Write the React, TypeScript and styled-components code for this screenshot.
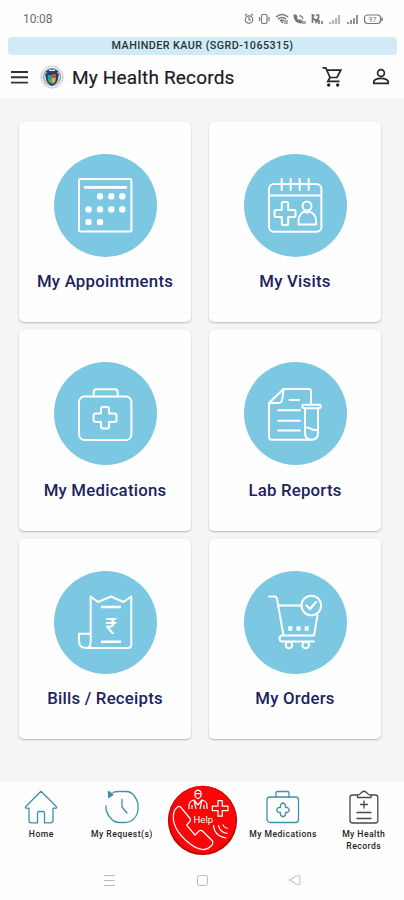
import React from "react";
import styled, { createGlobalStyle } from "styled-components";

const GlobalStyle = createGlobalStyle`
  * { box-sizing: border-box; }
  body { margin: 0; background: #fefefe; font-family: Roboto, "Liberation Sans", sans-serif; }
  svg { display: block; flex: none; }
`;

const Screen = styled.div`
  width: 404px;
  height: 900px;
  display: flex;
  flex-direction: column;
  overflow: hidden;
  background: #fefefe;
`;

const StatusBar = styled.div`
  height: 37px;
  padding: 0 20px 0 23px;
  display: flex;
  align-items: center;
  justify-content: space-between;
  color: #6c6c6c;
`;

const Clock = styled.span`
  font-size: 12px;
  font-weight: 400;
  letter-spacing: -0.1px;
`;

const StatusIcons = styled.div`
  display: flex;
  align-items: center;
`;

const Banner = styled.div`
  height: 18px;
  margin: 0 7px 0 8px;
  border-radius: 4px;
  background: #d1ebf6;
  color: #27343a;
  font-size: 10.8px;
  font-weight: 500;
  line-height: 18px;
  text-align: center;
  letter-spacing: 0.42px;
`;

const AppBar = styled.header`
  height: 43px;
  padding: 0 14px 0 10px;
  display: flex;
  align-items: center;
`;

const Title = styled.h1`
  flex: 1;
  margin: 2px 0 0 8px;
  font-size: 19px;
  font-weight: 400;
  color: #1c1c1c;
  -webkit-text-stroke: 0.2px #1c1c1c;
  letter-spacing: 0.17px;
`;

const HeaderActions = styled.div`
  display: flex;
  gap: 28px;
  margin-top: 1px;
`;

const CartSlot = styled.div`
  margin-right: 2px;
`;

const Logo = styled.svg`
  margin-left: 11px;
`;

const Main = styled.main`
  height: 684px;
  padding: 23.5px 22.5px 0 19px;
  background: #f5f5f5;
`;

const CardGrid = styled.div`
  display: grid;
  grid-template-columns: 172px 172px;
  grid-auto-rows: 200.5px;
  column-gap: 18px;
  row-gap: 8px;
`;

const Card = styled.section`
  padding-top: 32px;
  display: flex;
  flex-direction: column;
  align-items: center;
  background: #fefefe;
  border-radius: 5px;
  box-shadow: 0 1px 2px rgba(0, 0, 0, 0.25);
`;

const IconDisc = styled.div`
  width: 103px;
  height: 103px;
  border-radius: 50%;
  background: #7cc7e2;
  display: flex;
  align-items: center;
  justify-content: center;
  padding-right: 1px;
`;

const CardLabel = styled.div`
  margin-top: 13.5px;
  font-size: 16.8px;
  line-height: 22px;
  font-weight: 500;
  white-space: nowrap;
  color: #201f60;
  letter-spacing: 0.22px;
`;

const TabBar = styled.nav`
  height: 78px;
  padding-left: 1px;
  display: grid;
  grid-template-columns: repeat(5, 1fr);
  background: #fefefe;
`;

const Tab = styled.div`
  padding-top: 8px;
  display: flex;
  flex-direction: column;
  align-items: center;
`;

const HelpTab = styled.div`
  padding-top: 3px;
  display: flex;
  justify-content: center;
`;

const TabLabel = styled.div`
  margin-top: 5px;
  font-size: 8.6px;
  line-height: 11.5px;
  font-weight: 500;
  color: #222;
  text-align: center;
  white-space: pre;
  letter-spacing: 0.45px;
`;

const SystemNav = styled.div`
  height: 40px;
  padding: 0 103px 0 103px;
  display: flex;
  align-items: center;
  justify-content: space-between;
`;

const LineIcon = ({ children }: { children: React.ReactNode }) => (
  <svg width="54" height="54" viewBox="0 0 54 54" overflow="visible" fill="none" stroke="#fff" strokeWidth="2" strokeLinecap="round" strokeLinejoin="round">
    {children}
  </svg>
);

const dotPositions = [
  [22, 18.3], [33.3, 18.3], [44.3, 18.3],
  [10.5, 31.3], [22, 31.3], [33.3, 31.3], [44.3, 31.3],
  [10.5, 44], [22, 44],
];

const AppointmentsIcon = () => (
  <LineIcon>
    <rect x="1" y="1" width="52.4" height="52.4" rx="1.5" />
    <path d="M7 9.4H48" strokeWidth="2.6" />
    {dotPositions.map(([x, y]) => (
      <rect key={`${x}-${y}`} x={x - 3.1} y={y - 3.1} width="6.2" height="6.2" rx="2.2" fill="#fff" stroke="none" />
    ))}
  </LineIcon>
);

const VisitsIcon = () => (
  <LineIcon>
    <rect x="1" y="6" width="52.4" height="47.8" rx="5" />
    <path d="M1 17.5H53M13.7 1V12M22.7 1V12M31.7 1V12M40.7 1V12" />
    <path d="M13.8 25.500q0-1.500 1.500-1.500h3.400q1.500 0 1.500 1.500V32h5.800q1.500 0 1.500 1.500v4q0 1.500-1.500 1.500h-5.800v6.500q0 1.500-1.500 1.500h-3.400q-1.500 0-1.500-1.500V39H8q-1.500 0-1.500-1.500v-4Q6.500 32 8 32h5.800Z" />
    <circle cx="39" cy="28" r="4.500" />
    <path d="M30.500 46.500v-4.500c0-4 2.500-6.500 5.500-8.500q3 2 6 0c3.500 2 6 4.500 6 8.500v4.500Z" />
  </LineIcon>
);

const MedicationsIcon = () => (
  <LineIcon>
    <rect x="1" y="9.500" width="52.4" height="43.500" rx="5.500" />
    <path d="M15.700 9.500V5.500q0-3.300 3-3.300h18q3 0 3 3.300v4" />
    <path d="M23 22q0-2 2-2h4q2 0 2 2v4.500h5q2.500 0 2.500 2v4.500q0 2-2.500 2h-5v4.500q0 2-2 2h-4q-2 0-2-2V35h-5q-2.500 0-2.500-2v-4.500q0-2 2.500-2h5Z" />
  </LineIcon>
);

const LabIcon = () => (
  <LineIcon>
    <path d="M43 17.500V4q0-2-2-2H15.500L1 16v34q0 2.700 2.700 2.700H44M15.500 2l-1.200 10q-.4 4-4 4H1" />
    <path d="M21.500 13H31M10 23.300H32M10 33.700H32M10 43.500H32" />
    <rect x="34.300" y="17.800" width="18.500" height="3.400" rx="1.700" />
    <path d="M37 21.500V46q0 6.700 6.500 6.700T50 46V21.500M37 41q3-1.500 6 .8t7 .5" />
  </LineIcon>
);

const BillsIcon = () => (
  <LineIcon>
    <path d="M12.700 47V1.500L20 7 33 1.500 45.500 7 53.300 1.500V49.500q0 3.500-3.500 3.500H8.500Q1 53 1 46V38.700H12.700M12.700 46q0 7-4.500 7" />
    <path d="M23 12H43M23 46.700H43" strokeWidth="2.500" strokeLinecap="butt" />
    <text x="33" y="38.800" textAnchor="middle" fill="#fff" stroke="none" fontFamily="Roboto, DejaVu Sans, sans-serif" fontSize="22.500" fontWeight="400">₹</text>
  </LineIcon>
);

const OrdersIcon = () => (
  <LineIcon>
    <path d="M1 1.500H6.500Q8.500 1.500 9 4l6.500 36.500M11 10.500H33M49.500 20.500L46 40.500H14Q11.500 41 11.500 43.500T14 46.500H46" />
    <circle cx="43.300" cy="10.500" r="9.800" />
    <path d="M38.500 10.500l3.500 3.500 6-7" strokeWidth="2.400" />
    <circle cx="21" cy="50" r="3.300" />
    <circle cx="37.700" cy="50" r="3.300" />
    <path d="M20.300 33.500h4M28.500 33.500h4M36.700 33.500h4" strokeWidth="4.500" strokeLinecap="butt" />
  </LineIcon>
);

const MenuIcon = () => (
  <svg width="19" height="16" viewBox="0 0 19 16" stroke="#333" strokeWidth="1.900">
    <path d="M1 3H18M1 8.300H18M1 13.600H18" />
  </svg>
);

const Emblem = () => (
  <Logo width="24" height="26" viewBox="0 0 24 26">
    <circle cx="12" cy="13" r="11" fill="#e7ecef" stroke="#a4b0b6" strokeDasharray="1.500 1" />
    <circle cx="12" cy="13" r="8.500" fill="#d5dde0" stroke="#56758b" strokeWidth=".7" />
    <path d="M6 7Q12 3.500 18 7L17 10H7Z" fill="#243f69" />
    <path d="M5 9.500H19L17.500 17Q16 20 12 22 8 20 6.500 17Z" fill="#263f62" />
    <path d="M8 11h4v4H7.500Z" fill="#3a94a0" />
    <path d="M12 10h4v4h-4Z" fill="#bd553d" />
    <path d="M12 14h4l-1 4-3 2Z" fill="#d5b74e" />
    <path d="M8 15h4v4.500L8.700 18Z" fill="#52a869" />
    <path d="M9 6.500h6" stroke="#f0f2f2" />
  </Logo>
);

const CartIcon = () => (
  <svg width="20" height="22" viewBox="0 0 20 22" fill="none" stroke="#252525" strokeWidth="1.700">
    <path d="M.5 1.800H3.800L8 11.500H15L18.800 4.200H5M8 11.500L5.800 15.300H17.500" />
    <circle cx="6.700" cy="19" r="1.700" fill="#252525" stroke="none" />
    <circle cx="15.700" cy="19" r="1.700" fill="#252525" stroke="none" />
  </svg>
);

const UserIcon = () => (
  <svg width="18" height="22" viewBox="0 0 18 22" fill="none" stroke="#252525" strokeWidth="1.700">
    <circle cx="9" cy="7" r="3.400" />
    <path d="M1.800 17.300V15.500Q3 12.400 9 12.400T16.200 15.500V17.300Z" />
  </svg>
);

const StatusGlyphs = () => (
  <svg width="141" height="14" viewBox="0 0 141 14" fill="none" stroke="#777" strokeWidth="1.200">
    <circle cx="6" cy="7.500" r="3.700" />
    <path d="M2 3.500L4 2M10 3.500L8 2M6 5v3h2" />
    <rect x="18.500" y="2.500" width="5.500" height="9" rx="1.500" />
    <path d="M16.500 5v4M26 5v4" />
    <path d="M33 5Q39 0 45 5M35 7Q39 4 43 7M37 9Q39 7 41 9" strokeWidth="1.600" />
    <path d="M38 9l2 2M42 8v4M44 8v4" />
    <path d="M51 3q0 7 7 8l1-2-2-1-1 1-3-3 1-1-1-2Z" fill="#777" />
    <path d="M56 4q3-1 4 3M60 9v3M62 9v3" />
    <path d="M69.500 11V3l2 1M69.500 6l4 3M73 3h2.500v3L73 11V7M76 12V8M79 12V9" strokeWidth="1.700" />
    <path d="M87 12V10M90 12V8M93 12V6M96 12V3" stroke="#b7b7b7" strokeWidth="2.200" />
    <path d="M105 12V10M108 12V8M111 12V6M114 12V3" strokeWidth="1.600" />
    <rect x="121.500" y="3" width="16" height="8.500" rx="3" />
    <path d="M139 5.500v3.500" strokeWidth="1.500" />
    <text x="129.500" y="10" textAnchor="middle" fill="#777" stroke="none" fontFamily="Roboto, sans-serif" fontSize="7">97</text>
  </svg>
);

const TabIcon = ({ color = "#3c91ac", children }: { color?: string; children: React.ReactNode }) => (
  <svg width="34" height="34" viewBox="0 0 34 34" fill="none" stroke={color} strokeWidth="1.300" strokeLinecap="round" strokeLinejoin="round">
    {children}
  </svg>
);

const HomeIcon = () => (
  <TabIcon>
    <path d="M17 1.200L32.500 16.700q.5 1.800-1.500 1.500H29V30.500q0 2.300-2.300 2.300H20.500V23.500q0-2-2-2h-3q-2 0-2 2v9.300H7.300Q5 32.800 5 30.500V18.200H3q-2 .3-1.500-1.500Z" />
  </TabIcon>
);

const RequestIcon = () => (
  <TabIcon>
    <path d="M8 2.500Q10 1.500 14 1.500h7q5 0 8 4t4 8v7q-1 6-6 10-3 2-7 2h-5q-6 0-9-4-4-4-5-9V16" />
    <path d="M3.500 1.500L8 4.500 3.700 7.500Z" fill="#3c91ac" />
    <path d="M17 9.500V17l5 6" />
  </TabIcon>
);

const BagIcon = () => (
  <TabIcon>
    <rect x="1" y="7" width="31.500" height="25.500" rx="3" />
    <path d="M10 7V2.700Q10 1.500 11.500 1.500h10Q23 1.500 23 3v4" />
    <path d="M14.500 15q2.500-4 5 0v2.500h2q3.500 2.500 0 5h-2V25q-2.500 3.500-5 0v-2.500h-2q-3.500-2.500 0-5h2Z" />
  </TabIcon>
);

const ClipboardIcon = () => (
  <TabIcon color="#494949">
    <path d="M10 5H5.500Q3 5 3 7.500v23Q3 33 5.500 33h23q2.300 0 2.300-2.500v-23Q30.800 5 28.500 5H24" />
    <path d="M10.500 7.500V5Q13 5 14 3q3-3.500 6 0 1 2 4 2v2.500Z" />
    <path d="M17 11v7M13.500 14.500h7M10 22.500H24M10 28.500H24" />
  </TabIcon>
);

const HelpButton = () => (
  <svg width="71" height="71" viewBox="0 0 71 71" fill="none" stroke="#fff" strokeWidth="1.250" strokeLinejoin="round">
    <circle cx="35.500" cy="35.500" r="34.600" fill="#a70b0d" stroke="none" />
    <circle cx="35.500" cy="34.800" r="33.500" fill="#fb0508" stroke="#e50000" strokeWidth="1" />
    <path d="M10.500 22Q12.500 20.500 14 22.500L23 33.500Q24 35 23 36.500L19.500 40 28 50 32 46Q34 44.500 36 46.500L45.500 56Q46.500 58 45 60 41 64.500 36 64.500 29 64 22 58 13 51 8.500 42 5 34 7 27 8 24 10.500 22Z" />
    <path d="M28 7q3-4 6 0v4q-3 5-6 0ZM28 8.500h6M22 24v-4q.5-4 5-5l4 5 4-5q4.500 1 5 5v4M25 24v-4M37 24v-4M27 15l2 9M35 15l-2 9" />
    <path d="M51 15.500h4.300v5.700h5.700v4.300h-5.700v5.700H51v-5.700h-5.700v-4.300H51Z" />
    <path d="M46.500 40q.5 11 13 13M51.500 40q.5 7 9 8.500M56 39.500q.5 3 5 4" />
    <text x="36.300" y="38" textAnchor="middle" fill="#fff" stroke="none" fontFamily="Roboto, sans-serif" fontSize="9.500">Help</text>
  </svg>
);

const cards = [
  { label: "My Appointments", Icon: AppointmentsIcon },
  { label: "My Visits", Icon: VisitsIcon },
  { label: "My Medications", Icon: MedicationsIcon },
  { label: "Lab Reports", Icon: LabIcon },
  { label: "Bills / Receipts", Icon: BillsIcon },
  { label: "My Orders", Icon: OrdersIcon },
];

const leftTabs = [
  { label: "Home", Icon: HomeIcon },
  { label: "My Request(s)", Icon: RequestIcon },
];

const rightTabs = [
  { label: "My Medications", Icon: BagIcon },
  { label: "My Health\nRecords", Icon: ClipboardIcon },
];

const renderTab = ({ label, Icon }: { label: string; Icon: React.FC }) => (
  <Tab key={label}>
    <Icon />
    <TabLabel>{label}</TabLabel>
  </Tab>
);

export default function App() {
  return (
    <Screen>
      <GlobalStyle />
      <StatusBar>
        <Clock>10:08</Clock>
        <StatusIcons><StatusGlyphs /></StatusIcons>
      </StatusBar>
      <Banner>MAHINDER KAUR (SGRD-1065315)</Banner>
      <AppBar>
        <MenuIcon />
        <Emblem />
        <Title>My Health Records</Title>
        <HeaderActions>
          <CartSlot><CartIcon /></CartSlot>
          <UserIcon />
        </HeaderActions>
      </AppBar>
      <Main>
        <CardGrid>
          {cards.map(({ label, Icon }) => (
            <Card key={label}>
              <IconDisc><Icon /></IconDisc>
              <CardLabel>{label}</CardLabel>
            </Card>
          ))}
        </CardGrid>
      </Main>
      <TabBar>
        {leftTabs.map(renderTab)}
        <HelpTab><HelpButton /></HelpTab>
        {rightTabs.map(renderTab)}
      </TabBar>
      <SystemNav>
        <svg width="13" height="13" viewBox="0 0 13 13" stroke="#bbb"><path d="M1 1.500H12M1 6.500H12M1 11.500H12" /></svg>
        <svg width="13" height="13" viewBox="0 0 13 13" fill="none" stroke="#bbb"><rect x="1.500" y="1.500" width="10" height="10" rx="2" /></svg>
        <svg width="13" height="13" viewBox="0 0 13 13" fill="none" stroke="#bbb"><path d="M1.500 6L9.500 1.500Q12 1 12 3v6.500q0 2-2.500 1Z" /></svg>
      </SystemNav>
    </Screen>
  );
}
